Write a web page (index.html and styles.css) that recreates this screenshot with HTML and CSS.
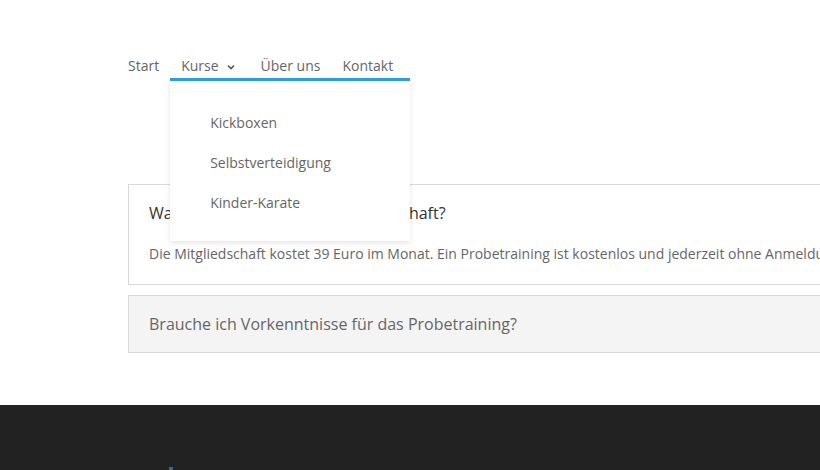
FILE: index.html
```html
<!DOCTYPE html>
<html lang="de">
<head>
    <meta charset="UTF-8">
    <meta name="viewport" content="width=device-width, initial-scale=1.0">
    <title>Kampfsport - FAQ</title>
    <link rel="stylesheet" href="styles.css">
</head>
<body>
    <div class="page">
        <header class="header">
            <nav class="menu">
                <ul class="menu-list">
                    <li class="menu-item">Start</li>
                    <li class="menu-item has-sub open">
                        <span class="menu-label">Kurse
                            <svg class="chevron" width="10" height="8" viewBox="0 0 10 8">
                                <path d="M2 2.5 L5 5.5 L8 2.5" fill="none" stroke="#555" stroke-width="1.6"/>
                            </svg>
                        </span>
                        <ul class="submenu">
                            <li>Kickboxen</li>
                            <li>Selbstverteidigung</li>
                            <li>Kinder-Karate</li>
                        </ul>
                    </li>
                    <li class="menu-item">Über uns</li>
                    <li class="menu-item">Kontakt</li>
                </ul>
            </nav>
        </header>

        <main class="content">
            <div class="faq">
                <div class="faq-item active">
                    <h3 class="faq-title">Was kostet eine Familienmitgliedschaft?</h3>
                    <p class="faq-text">Die Mitgliedschaft kostet 39 Euro im Monat. Ein Probetraining ist kostenlos und jederzeit ohne Anmeldung möglich.</p>
                </div>
                <div class="faq-item closed">
                    <h3 class="faq-title">Brauche ich Vorkenntnisse für das Probetraining?</h3>
                </div>
            </div>
        </main>

        <footer class="footer">
            <div class="footer-logo"></div>
        </footer>
    </div>
</body>
</html>
```

FILE: styles.css
```css
html, body {
    margin: 0;
    padding: 0;
}

body {
    font-family: 'Open Sans', 'Noto Sans', sans-serif;
    background: #fff;
    color: #666;
    overflow: hidden;
}

.page {
    width: 1200px;
}

.header {
    padding: 56px 0 0 128px;
}

.menu-list {
    list-style: none;
    margin: 0;
    padding: 0;
    display: flex;
}

.menu-item {
    position: relative;
    font-size: 14px;
    line-height: 20px;
    padding: 0 11px;
    color: #666;
}

.menu-item:first-child {
    padding-left: 0;
}

.menu-label {
    display: inline-flex;
    align-items: center;
    gap: 7px;
}

.chevron {
    margin-top: 2px;
    margin-right: 3px;
}

.submenu {
    display: none;
    position: absolute;
    top: 22px;
    left: 0;
    width: 240px;
    margin: 0;
    padding: 22px 0 18px;
    list-style: none;
    background: #fff;
    border-top: 3px solid #2e9be2;
    box-shadow: 0 2px 5px rgba(0, 0, 0, 0.1);
    z-index: 10;
}

.has-sub.open .submenu {
    display: block;
}

.submenu li {
    font-size: 14px;
    line-height: 20px;
    padding: 10px 40px;
    color: #666;
}

.content {
    padding: 108px 0 42px 128px;
}

.faq-item {
    border: 1px solid #d9d9d9;
    padding: 17px 20px 18px;
    margin-bottom: 10px;
}

.faq-item.closed {
    background: #f4f4f4;
    padding: 17px 20px;
}

.faq-title {
    margin: 0;
    font-size: 16px;
    font-weight: 400;
    line-height: 22px;
    color: #333;
}

.faq-item.closed .faq-title {
    color: #666;
}

.faq-text {
    margin: 18px 0 0;
    font-size: 14px;
    line-height: 24px;
    color: #666;
}

.footer {
    background: #222;
    height: 80px;
    position: relative;
}

.footer-logo {
    position: absolute;
    left: 169px;
    top: 62px;
    width: 4px;
    height: 4px;
    background: #2c6f95;
}
```
